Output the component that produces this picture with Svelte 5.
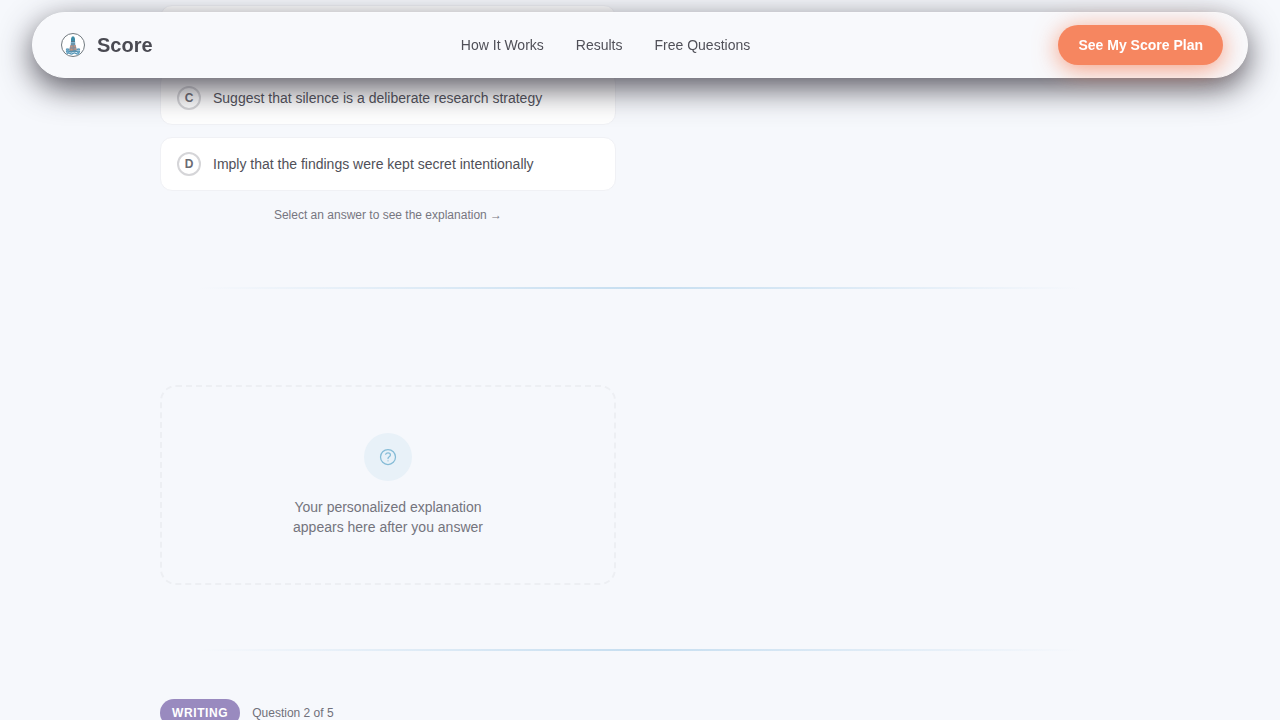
<script lang="ts">
	type Option = { letter: string; text: string };

	const links = ['How It Works', 'Results', 'Free Questions'];

	const options: Option[] = [
		{ letter: 'C', text: 'Suggest that silence is a deliberate research strategy' },
		{ letter: 'D', text: 'Imply that the findings were kept secret intentionally' }
	];

	let selected = $state('');
</script>

<header class="nav">
	<a class="brand" href="/">
		<svg width="32" height="32" viewBox="0 0 32 32" fill="none" aria-hidden="true">
			<circle cx="16" cy="16" r="11.5" fill="#fff" stroke="#727a80" />
			<path d="M14 9.500 15 7.500h2l1 2v2.500h-4z" fill="#3d8ba6" />
			<path d="M14 12h4l.5 4.500h-5z" fill="#7fb5cf" />
			<path d="M14 12.500h4M14 15h4" stroke="#56788b" />
			<path d="m12 21 1.500-5h5l1.500 5-1 2h-6z" fill="#8a8f98" />
			<path d="M13.500 17.500h2M17 17h1.500M13.500 20.500h2M17.500 20h1.500" stroke="#c9947c" stroke-width="1.500" />
			<path d="M9 19.500h3v5H9zM20 19.500h3v5h-3z" fill="#9dc3d8" />
			<path d="M9 20.500q1.500-1 3 0M20 20.500q1.500-1 3 0M9 22.500q1.750-1.200 3.500 0t3.500 0 3.500 0 3.500 0M10 24.500q1.500-1.200 3 0t3 0 3 0 3 0" stroke="#4f93b6" stroke-width="1.200" />
		</svg>
		<span>Score</span>
	</a>
	<nav class="links">
		{#each links as link}
			<a href="#{link.toLowerCase().replaceAll(' ', '-')}">{link}</a>
		{/each}
	</nav>
	<button class="cta">See My Score Plan</button>
</header>

<main>
	<section class="question">
		<div class="options">
			<div class="option" aria-hidden="true"></div>
			{#each options as option}
				<button
					class="option"
					aria-pressed={selected === option.letter}
					onclick={() => (selected = option.letter)}
				>
					<span class="letter">{option.letter}</span>
					<span>{option.text}</span>
				</button>
			{/each}
		</div>
		<p class="hint">Select an answer to see the explanation →</p>
	</section>

	<div class="divider"></div>

	<section class="explanation">
		<div class="placeholder">
			<div class="bubble">
				<svg width="20" height="20" viewBox="0 0 24 24" fill="none" stroke="#84bbd6" stroke-width="1.5" stroke-linecap="round" stroke-linejoin="round" aria-hidden="true">
					<circle cx="12" cy="12" r="9" />
					<path d="M9.200 8.600C9.700 7.400 10.800 7 12 7c1.600 0 2.900 1 2.900 2.500 0 2.200-2.900 2-2.900 4.300" />
					<path d="M12 16.500h.01" />
				</svg>
			</div>
			<p>Your personalized explanation<br />appears here after you answer</p>
		</div>
	</section>

	<div class="divider"></div>

	<section class="next">
		<span class="tag">WRITING</span>
		<span class="count">Question 2 of 5</span>
	</section>
</main>

<style>
	:global(body) {
		background: #f6f8fc;
		font-family: 'Liberation Sans', Arial, sans-serif;
		color: #45454d;
		overflow: hidden;
	}

	.nav {
		position: fixed;
		z-index: 10;
		top: 12px;
		left: 32px;
		right: 32px;
		display: flex;
		align-items: center;
		justify-content: space-between;
		padding: 12px 24px;
		border: 1px solid #fafbfd;
		border-radius: 40px;
		background: #f8f9fc;
		box-shadow: 0 10px 32px rgba(45, 43, 54, 0.8);
	}

	.brand {
		display: flex;
		align-items: center;
		gap: 8px;
		font-size: 20px;
		font-weight: 700;
		color: #4a4a52;
		text-decoration: none;
	}

	.links {
		display: flex;
		gap: 32px;
	}

	.links a {
		font-size: 14px;
		color: #505058;
		text-decoration: none;
	}

	.cta {
		height: 40px;
		padding: 0 20px;
		border: 0;
		border-radius: 20px;
		background: #f68660;
		box-shadow: 0 4px 24px rgba(246, 134, 96, 0.8);
		color: #fff;
		font: 700 14px 'Liberation Sans', Arial, sans-serif;
		cursor: pointer;
	}

	main {
		max-width: 960px;
		margin: 0 auto;
		padding: 5px 24px 0;
	}

	.question,
	.explanation {
		display: grid;
		grid-template-columns: 1fr 1fr;
		column-gap: 48px;
		padding-bottom: 64px;
	}

	.options {
		display: flex;
		flex-direction: column;
		gap: 12px;
	}

	.option {
		display: flex;
		align-items: center;
		gap: 12px;
		box-sizing: border-box;
		min-height: 54px;
		padding: 14px 16px;
		border: 1px solid #f0f1f5;
		border-radius: 12px;
		background: #fff;
		color: #505058;
		font: 14px/20px 'Liberation Sans', Arial, sans-serif;
		text-align: left;
		cursor: pointer;
	}

	.letter {
		display: flex;
		align-items: center;
		justify-content: center;
		box-sizing: border-box;
		width: 24px;
		height: 24px;
		border: 2px solid #d5d5d8;
		border-radius: 50%;
		color: #6b6b73;
		font-size: 12px;
		font-weight: 700;
	}

	.hint {
		grid-column: 1;
		margin: 16px 0 0;
		font-size: 12px;
		line-height: 16px;
		text-align: center;
		color: #767680;
	}

	.divider {
		height: 2px;
		background: linear-gradient(90deg, transparent 4%, #c6def0, transparent 96%);
	}

	.explanation {
		padding-top: 96px;
	}

	.placeholder {
		display: flex;
		flex-direction: column;
		align-items: center;
		gap: 16px;
		padding: 46px;
		border: 2px dashed #edeff3;
		border-radius: 16px;
	}

	.bubble {
		display: flex;
		align-items: center;
		justify-content: center;
		width: 48px;
		height: 48px;
		border-radius: 50%;
		background: #e8f1f8;
	}

	.placeholder p {
		margin: 0;
		font-size: 14px;
		line-height: 20px;
		text-align: center;
		color: #74747d;
	}

	.next {
		display: flex;
		align-items: center;
		gap: 12px;
		padding-top: 48px;
	}

	.tag {
		padding: 6px 12px;
		border-radius: 14px;
		background: #998abf;
		color: #fff;
		font-size: 12px;
		font-weight: 700;
		line-height: 16px;
		letter-spacing: 0.6px;
	}

	.count {
		font-size: 12px;
		color: #70707a;
	}
</style>
